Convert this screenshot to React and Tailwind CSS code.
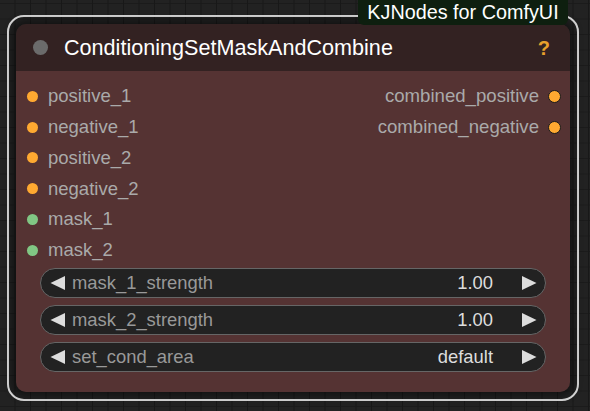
const inputs = [
  { name: "positive_1", color: "bg-[#ffa931]" },
  { name: "negative_1", color: "bg-[#ffa931]" },
  { name: "positive_2", color: "bg-[#ffa931]" },
  { name: "negative_2", color: "bg-[#ffa931]" },
  { name: "mask_1", color: "bg-[#81c784]" },
  { name: "mask_2", color: "bg-[#81c784]" },
];

const outputs = ["combined_positive", "combined_negative"];

const widgets = [
  { label: "mask_1_strength", value: "1.00" },
  { label: "mask_2_strength", value: "1.00" },
  { label: "set_cond_area", value: "default" },
];

function Arrow({ dir }) {
  return (
    <svg width="16" height="16" viewBox="0 0 16 16" className="shrink-0">
      {dir === "left" ? (
        <polygon points="15,1 15,15 0.5,8" fill="#dddddd" />
      ) : (
        <polygon points="1,1 1,15 15.5,8" fill="#dddddd" />
      )}
    </svg>
  );
}

export default function App() {
  return (
    <div
      className="relative w-[590px] h-[411px] overflow-hidden bg-[#222222] bg-[linear-gradient(to_right,#181818_1px,transparent_1px),linear-gradient(to_bottom,#1b1b1b_1px,transparent_1px)] bg-[size:15.5px_15.5px] bg-[position:-1px_3px]"
      style={{ fontFamily: '"Liberation Sans", Arial, sans-serif' }}
    >
      {/* node with selection outline */}
      <div className="absolute left-[7px] top-[15px] w-[572px] border-2 border-[#dcdcdc] rounded-[17px] p-[7px]">
        <div className="rounded-[10px] overflow-hidden shadow-[0_0_8px_4px_rgba(0,0,0,0.45)]">
          {/* title */}
          <div className="h-[47px] bg-[#332222] flex items-center pl-[17px] pr-[20px]">
            <div className="w-[15px] h-[15px] rounded-full bg-[#6b6b6b]" />
            <div className="ml-[16px] text-[21.6px] text-white leading-none">ConditioningSetMaskAndCombine</div>
            <div className="ml-auto text-[20px] font-bold text-[#e8a02c] leading-none">?</div>
          </div>

          {/* body */}
          <div className="bg-[#553333] pt-[10px] pb-[20px]">
            <div className="flex">
              <div className="flex-1">
                {inputs.map((s) => (
                  <div key={s.name} className="h-[30.8px] flex items-center pl-[11px]">
                    <div className={`w-[11px] h-[11px] rounded-full ${s.color}`} />
                    <span className="ml-[10px] text-[18.5px] text-[#aaaaaa] leading-none">{s.name}</span>
                  </div>
                ))}
              </div>
              <div>
                {outputs.map((o) => (
                  <div key={o} className="h-[30.8px] flex items-center justify-end pr-[9px]">
                    <span className="text-[18.6px] text-[#aaaaaa] leading-none">{o}</span>
                    <div className="ml-[9px] w-[13px] h-[13px] rounded-full bg-[#ffa931] border-[1.5px] border-[#1a1a1a]" />
                  </div>
                ))}
              </div>
            </div>

            <div className="mt-[2px] px-[24px] flex flex-col gap-[7px]">
              {widgets.map((w) => (
                <div
                  key={w.label}
                  className="h-[30px] rounded-full bg-[#222222] border border-[#666666] flex items-center pl-[9px] pr-[8px]"
                >
                  <Arrow dir="left" />
                  <span className="ml-[6px] text-[18.4px] text-[#999999] leading-none">{w.label}</span>
                  <span className="ml-auto text-[18.4px] text-[#dddddd] leading-none">{w.value}</span>
                  <span className="ml-[28px]">
                    <Arrow dir="right" />
                  </span>
                </div>
              ))}
            </div>
          </div>
        </div>
      </div>

      {/* badge */}
      <div className="absolute left-[358px] top-0 w-[210px] h-[25px] bg-[#0e1f0f] rounded-b-[6px] flex items-center justify-center">
        <span className="text-[19.8px] text-white leading-none">KJNodes for ComfyUI</span>
      </div>
    </div>
  );
}
